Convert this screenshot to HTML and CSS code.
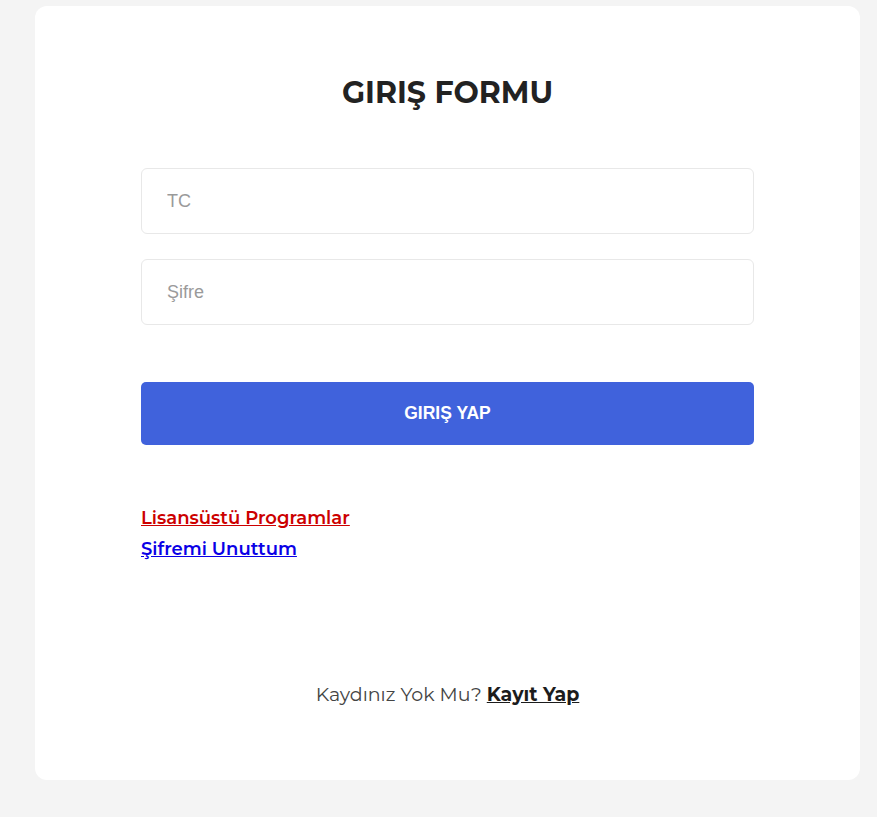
FILE: index.html
```html
<!DOCTYPE html>
<html lang="tr">
<head>
<meta charset="utf-8">
<title>Giriş Formu</title>
<link rel="stylesheet" href="styles.css">
</head>
<body>
<main class="card">
  <h1 class="title">GIRIŞ FORMU</h1>
  <form class="form">
    <input class="field" type="text" placeholder="TC">
    <input class="field" type="password" placeholder="Şifre">
    <button class="submit" type="button">GIRIŞ YAP</button>
  </form>
  <div class="links">
    <a class="link link-red" href="#">Lisansüstü Programlar</a>
    <a class="link link-blue" href="#">Şifremi Unuttum</a>
  </div>
  <p class="signup">Kaydınız Yok Mu? <a class="signup-link" href="#">Kayıt Yap</a></p>
</main>
</body>
</html>
```

FILE: styles.css
```css
* { box-sizing: border-box; }
html, body { margin: 0; padding: 0; }
body {
  background: #f4f4f4;
  font-family: "Montserrat", Inter, "Noto Sans", sans-serif;
  padding: 6px 17px 37px 35px;
}
.card {
  background: #ffffff;
  border-radius: 12px;
  width: 825px;
  height: 774px;
  padding: 69px 106px 0;
  display: flex;
  flex-direction: column;
}
.title {
  margin: 0;
  text-align: center;
  font-size: 30px;
  line-height: 36px;
  font-weight: 700;
  color: #222222;
}
.form {
  margin-top: 57px;
  display: flex;
  flex-direction: column;
}
.field {
  height: 66px;
  border: 1px solid #e8e8e8;
  border-radius: 6px;
  padding: 0 25px;
  font-family: "Liberation Sans", Arial, sans-serif;
  font-size: 18px;
  color: #333;
  background: #fff;
  outline: none;
}
.field + .field { margin-top: 25px; }
.field::placeholder { color: #9a9a9a; }
.submit {
  margin-top: 57px;
  height: 63px;
  border: 0;
  border-radius: 5px;
  background: #4062dc;
  color: #ffffff;
  font-family: "Liberation Sans", Arial, sans-serif;
  font-weight: 700;
  font-size: 17.5px;
}
.links {
  margin-top: 58px;
  display: flex;
  flex-direction: column;
  align-items: flex-start;
}
.link {
  font-size: 18px;
  line-height: 31px;
  font-weight: 600;
  text-decoration: underline;
}
.link-red { color: #cc0000; }
.link-blue { color: #0a00e6; }
.signup {
  margin: 118px 0 0;
  text-align: center;
  font-size: 19px;
  line-height: 24px;
  color: #444444;
}
.signup-link {
  color: #1c1c1c;
  font-weight: 700;
  text-decoration: underline;
}
```
